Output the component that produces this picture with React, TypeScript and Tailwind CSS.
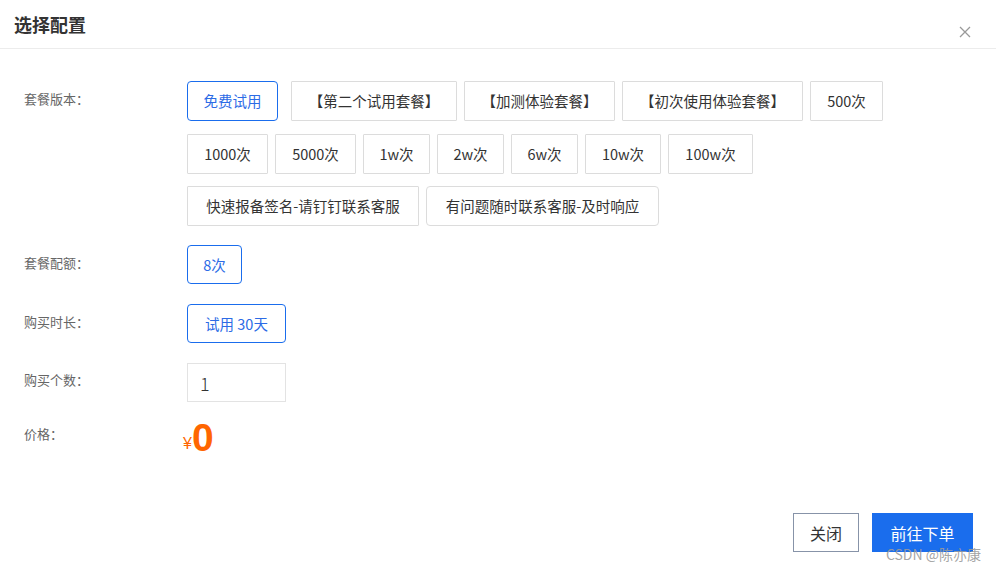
import React, { useState } from 'react';

type Pkg = { name: string; w: string; rounded?: boolean };

const PACKAGES: Pkg[] = [
  { name: '免费试用', w: 'w-[91px]' },
  { name: '【第二个试用套餐】', w: 'w-[166px] ml-[6px]' },
  { name: '【加测体验套餐】', w: 'w-[151px]' },
  { name: '【初次使用体验套餐】', w: 'w-[181px]' },
  { name: '500次', w: 'w-[73px]' },
  { name: '1000次', w: 'w-[81px]' },
  { name: '5000次', w: 'w-[81px]' },
  { name: '1w次', w: 'w-[67px]' },
  { name: '2w次', w: 'w-[67px]' },
  { name: '6w次', w: 'w-[67px]' },
  { name: '10w次', w: 'w-[76px]' },
  { name: '100w次', w: 'w-[85px]' },
  { name: '快速报备签名-请钉钉联系客服', w: 'w-[232px]' },
  { name: '有问题随时联系客服-及时响应', w: 'w-[233px]', rounded: true },
];

const Label: React.FC<{ children: React.ReactNode; className?: string }> = ({ children, className = '' }) => (
  <div className={`w-[163px] shrink-0 text-[13px] text-[#666] ${className}`}>{children}</div>
);

export default function App() {
  const [selected, setSelected] = useState(0);
  const [count, setCount] = useState('1');

  return (
    <div className="relative w-[996px] h-[570px] bg-white flex flex-col font-['Noto_Sans_CJK_SC',sans-serif] text-[#333]">
      {/* header */}
      <div className="h-[49px] shrink-0 border-b border-[#ececec] flex items-start justify-between pl-[14px] pr-[25px]">
        <div className="pt-[12px] text-[18px] leading-[24px] font-bold text-[#333]">选择配置</div>
        <button className="mt-[26px] text-[#999]">
          <svg width="12" height="12" viewBox="0 0 12 12" fill="none" stroke="currentColor" strokeWidth="1.3">
            <path d="M1 1L11 11M11 1L1 11" />
          </svg>
        </button>
      </div>

      {/* body */}
      <div className="flex flex-col pl-[24px] pt-[32px]">
        <div className="flex">
          <Label className="leading-[36px]">套餐版本：</Label>
          <div className="flex flex-wrap w-[720px] gap-x-[7px] gap-y-[12.5px]">
            {PACKAGES.map((p, i) => (
              <button
                key={p.name}
                onClick={() => setSelected(i)}
                className={`${p.w} h-[40px] border text-[14.5px] ${
                  selected === i
                    ? 'border-[#1a6ded] text-[#2c6be6] rounded-[4px]'
                    : `border-[#dcdcdc] text-[#333] ${p.rounded ? 'rounded-[4px]' : 'rounded-[1px]'}`
                }`}
              >
                {p.name}
              </button>
            ))}
          </div>
        </div>

        <div className="flex mt-[19px]">
          <Label className="leading-[36px]">套餐配额：</Label>
          <button className="w-[55px] h-[39px] border border-[#1a6ded] rounded-[4px] text-[14.5px] text-[#2c6be6]">8次</button>
        </div>

        <div className="flex mt-[20px]">
          <Label className="leading-[36px]">购买时长：</Label>
          <button className="w-[99px] h-[39px] border border-[#1a6ded] rounded-[4px] text-[14.5px] text-[#2c6be6]">试用 30天</button>
        </div>

        <div className="flex mt-[20px]">
          <Label className="leading-[33px]">购买个数：</Label>
          <input
            value={count}
            onChange={e => setCount(e.target.value.replace(/\D/g, ''))}
            className="w-[99px] h-[39px] border border-[#e3e3e3] px-[12px] text-[18px] font-light text-[#333] outline-none"
          />
        </div>

        <div className="flex mt-[20px]">
          <Label className="leading-[24px]">价格：</Label>
          <div className="flex items-baseline -ml-[4px] -mt-[4px] text-[#ff6600] font-['Liberation_Sans',sans-serif]">
            <span className="text-[16px] leading-none relative -top-[2px]">¥</span>
            <span className="text-[39px] leading-none font-bold">0</span>
          </div>
        </div>
      </div>

      {/* footer */}
      <div className="mt-auto flex justify-end gap-[13px] pr-[23px] pb-[18px]">
        <button className="w-[66px] h-[39px] border border-[#8793a8] text-[16px] text-[#333]">关闭</button>
        <button className="w-[101px] h-[39px] bg-[#1a6ded] text-[16px] text-white">前往下单</button>
      </div>

      <div className="absolute right-[15px] bottom-[7px] text-[14px] leading-[18px] text-[#9a9a9a]/90 pointer-events-none">
        CSDN @陈亦康
      </div>
    </div>
  );
}
